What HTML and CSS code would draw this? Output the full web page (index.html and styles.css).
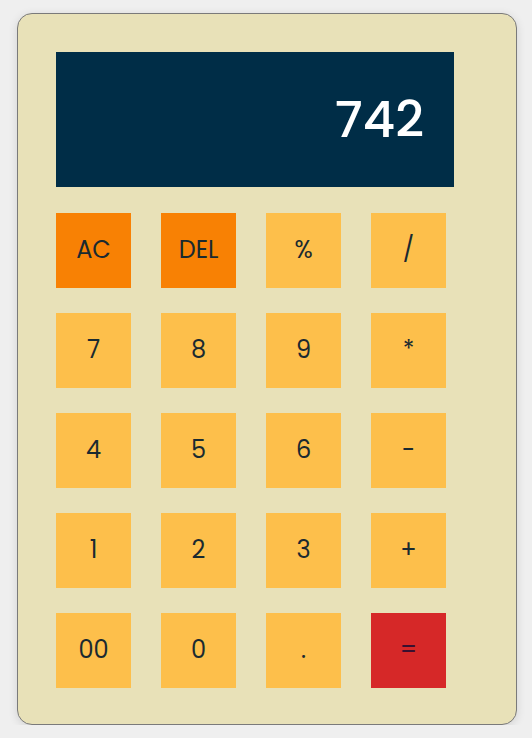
FILE: index.html
```html
<!DOCTYPE html>
<html>
<head>
<meta charset="utf-8">
<link rel="stylesheet" href="styles.css">
</head>
<body>
<div class="calc">
  <div class="display">742</div>
  <div class="keys">
    <button class="key fn">AC</button>
    <button class="key fn">DEL</button>
    <button class="key">%</button>
    <button class="key">/</button>
    <button class="key">7</button>
    <button class="key">8</button>
    <button class="key">9</button>
    <button class="key">*</button>
    <button class="key">4</button>
    <button class="key">5</button>
    <button class="key">6</button>
    <button class="key">-</button>
    <button class="key">1</button>
    <button class="key">2</button>
    <button class="key">3</button>
    <button class="key">+</button>
    <button class="key">00</button>
    <button class="key">0</button>
    <button class="key">.</button>
    <button class="key eq">=</button>
  </div>
</div>
</body>
</html>
```
FILE: styles.css
```css
html, body {
  margin: 0;
  padding: 0;
}
body {
  background: #efefef;
  font-family: Poppins, Inter, "Noto Sans", sans-serif;
}
.calc {
  box-sizing: border-box;
  width: 500px;
  height: 712px;
  margin: 13px 0 0 17px;
  padding: 38px 0 0 38px;
  background: #e8e1b8;
  border: 1px solid #7a7a7a;
  border-radius: 15px;
  box-shadow: 0 2px 10px rgba(0, 0, 0, 0.12);
}
.display {
  box-sizing: border-box;
  width: 398px;
  height: 135px;
  background: #002d47;
  color: #ffffff;
  font-size: 50px;
  font-weight: 500;
  display: flex;
  align-items: center;
  justify-content: flex-end;
  padding-right: 30px;
  margin-bottom: 26px;
}
.keys {
  display: grid;
  grid-template-columns: repeat(4, 75px);
  grid-auto-rows: 75px;
  column-gap: 30px;
  row-gap: 25px;
}
.key {
  border: none;
  margin: 0;
  padding: 0 0 3px 0;
  background: #fdbf4b;
  color: #1a2a30;
  font-family: inherit;
  font-size: 24px;
  font-weight: 400;
  display: flex;
  align-items: center;
  justify-content: center;
}
.key.fn {
  background: #f88104;
}
.key.eq {
  background: #d62828;
  color: #3a1030;
}
```
